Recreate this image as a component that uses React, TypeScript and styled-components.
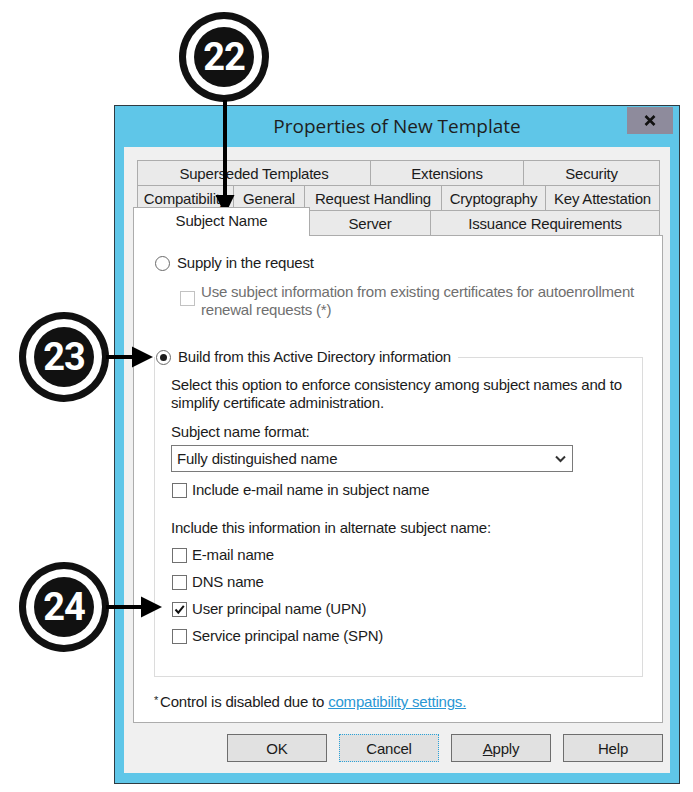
import React from 'react';
import styled, { createGlobalStyle } from 'styled-components';

const GlobalStyle = createGlobalStyle`
  html, body {
    margin: 0;
    padding: 0;
    background: #ffffff;
  }

  body {
    font-family: 'Liberation Sans', Arial, sans-serif;
    font-size: 15px;
    letter-spacing: -0.2px;
    color: #1b1b1b;
  }

  * {
    box-sizing: border-box;
  }
`;

type TabDef = { label: string; width: number };

const TOP_ROW: TabDef[] = [
  { label: 'Superseded Templates', width: 234 },
  { label: 'Extensions', width: 154 },
  { label: 'Security', width: 137 },
];

const MIDDLE_ROW: TabDef[] = [
  { label: 'Compatibility', width: 97 },
  { label: 'General', width: 72 },
  { label: 'Request Handling', width: 138 },
  { label: 'Cryptography', width: 105 },
  { label: 'Key Attestation', width: 115 },
];

const ALT_NAMES = [
  { label: 'E-mail name', checked: false },
  { label: 'DNS name', checked: false },
  { label: 'User principal name (UPN)', checked: true },
  { label: 'Service principal name (SPN)', checked: false },
];

const BADGES = [
  { num: '22', x: 224, y: 57 },
  { num: '23', x: 64, y: 357 },
  { num: '24', x: 64, y: 607 },
];

const CheckMark = () => (
  <svg width="13" height="13" viewBox="0 0 13 13">
    <path d="M2.5 6.5 L5.3 9.6 L10.8 2.8" fill="none" stroke="#111" strokeWidth="2" />
  </svg>
);

const App: React.FC = () => {
  return (
    <SPage>
      <GlobalStyle />
      <SWindow>
        <STitleBar>
          <STitle>Properties of New Template</STitle>
          <SCloseButton>
            <svg width="12" height="11" viewBox="0 0 12 11">
              <path d="M1.5 1 L10.5 10 M10.5 1 L1.5 10" stroke="#111" strokeWidth="2.6" />
            </svg>
          </SCloseButton>
        </STitleBar>

        <SClient>
          <STabRow $inset={4}>
            {TOP_ROW.map((t) => (
              <STab key={t.label} $width={t.width}>
                {t.label}
              </STab>
            ))}
          </STabRow>
          <STabRow $inset={4}>
            {MIDDLE_ROW.map((t) => (
              <STab key={t.label} $width={t.width}>
                {t.label}
              </STab>
            ))}
          </STabRow>
          <STabRow $inset={0}>
            <STab $width={177} $selected>
              Subject Name
            </STab>
            <STab $width={122}>Server</STab>
            <STab $width={230}>Issuance Requirements</STab>
          </STabRow>

          <SPanel>
            <SOptionRow>
              <SRadio />
              <span>Supply in the request</span>
            </SOptionRow>
            <SSubOption>
              <SCheckBox $disabled />
              <SDisabledText>
                Use subject information from existing certificates for autoenrollment
                <br />
                renewal requests (*)
              </SDisabledText>
            </SSubOption>

            <SGroup>
              <SLegend>
                <SRadio $checked />
                <span>Build from this Active Directory information</span>
              </SLegend>
              <SGroupBody>
                <SDescription>
                  Select this option to enforce consistency among subject names and to simplify
                  certificate administration.
                </SDescription>
                <SFieldLabel>Subject name format:</SFieldLabel>
                <SSelect>
                  <span>Fully distinguished name</span>
                  <svg width="11" height="8" viewBox="0 0 11 8">
                    <path d="M1 1.5 L5.5 6 L10 1.5" fill="none" stroke="#333" strokeWidth="2" />
                  </svg>
                </SSelect>
                <SCheckRow $top={9}>
                  <SCheckBox />
                  <span>Include e-mail name in subject name</span>
                </SCheckRow>
                <SFieldLabel $top={20}>Include this information in alternate subject name:</SFieldLabel>
                <SCheckList>
                  {ALT_NAMES.map((item) => (
                    <SCheckRow key={item.label}>
                      <SCheckBox>{item.checked && <CheckMark />}</SCheckBox>
                      <span>{item.label}</span>
                    </SCheckRow>
                  ))}
                </SCheckList>
              </SGroupBody>
            </SGroup>

            <SFootnote>
              <SAsterisk>*</SAsterisk>
              Control is disabled due to <SLink>compatibility settings.</SLink>
            </SFootnote>
          </SPanel>

          <SButtonRow>
            <SButton>OK</SButton>
            <SButton $focused>Cancel</SButton>
            <SButton>
              <u>A</u>pply
            </SButton>
            <SButton>Help</SButton>
          </SButtonRow>
        </SClient>
      </SWindow>

      {BADGES.map((b) => (
        <SBadge key={b.num} style={{ left: b.x - 30, top: b.y - 30 }}>
          {b.num}
        </SBadge>
      ))}

      <SArrows width="693" height="792" viewBox="0 0 693 792">
        <line x1="225" y1="100" x2="225" y2="198" stroke="#000" strokeWidth="4" />
        <polygon points="215.5,195 234.5,195 225,215" fill="#000" />
        <line x1="106" y1="357" x2="134" y2="357" stroke="#000" strokeWidth="4" />
        <polygon points="132,346.5 132,367.5 153,357" fill="#000" />
        <line x1="106" y1="607" x2="143" y2="607" stroke="#000" strokeWidth="4" />
        <polygon points="141,596.5 141,617.5 162,607" fill="#000" />
      </SArrows>
    </SPage>
  );
};

const SPage = styled.div`
  position: relative;
  width: 693px;
  height: 792px;
  padding: 105px 13px 0 114px;
  overflow: hidden;
`;

const SWindow = styled.div`
  display: flex;
  flex-direction: column;

  width: 566px;
  height: 679px;
  padding: 0 9px 10px;
  border: 1px solid #2f3b42;
  background: #5fc6e8;
`;

const STitleBar = styled.div`
  display: grid;
  grid-template-columns: 1fr auto 1fr;
  align-items: start;

  height: 41px;
`;

const STitle = styled.div`
  grid-column: 2;

  font-family: 'Open Sans', 'Liberation Sans', sans-serif;
  font-size: 19px;
  letter-spacing: 0;
  line-height: 41px;
  color: #1e1e1e;
`;

const SCloseButton = styled.div`
  grid-column: 3;
  justify-self: end;
  display: flex;
  align-items: center;
  justify-content: center;

  width: 46px;
  height: 27px;
  margin: 1px -3px 0 0;
  background: #8e8b9c;
`;

const SClient = styled.div`
  display: flex;
  flex-direction: column;
  flex: 1;

  padding: 13px 7px 0 9px;
  background: #f0f0f0;
`;

const STabRow = styled.div<{ $inset: number }>`
  display: flex;
  align-items: flex-end;

  height: 25px;
  padding-left: ${(p) => p.$inset}px;
`;

const STab = styled.div<{ $width: number; $selected?: boolean }>`
  display: flex;
  align-items: center;
  justify-content: center;

  width: ${(p) => p.$width}px;
  height: ${(p) => (p.$selected ? 29 : 25)}px;
  padding-bottom: ${(p) => (p.$selected ? 3 : 0)}px;
  border: 1px solid #acacac;
  border-bottom: none;
  background: ${(p) => (p.$selected ? '#ffffff' : '#eaeaea')};
  white-space: nowrap;

  position: ${(p) => (p.$selected ? 'relative' : 'static')};
  z-index: ${(p) => (p.$selected ? 1 : 'auto')};
  margin-bottom: ${(p) => (p.$selected ? -1 : 0)}px;

  &:not(:first-child) {
    margin-left: -1px;
  }
`;

const SPanel = styled.div`
  display: flex;
  flex-direction: column;

  height: 488px;
  padding: 18px 0 0 20px;
  border: 1px solid #acacac;
  background: #ffffff;
`;

const SOptionRow = styled.div`
  display: flex;
  align-items: center;

  line-height: 18px;
`;

const SRadio = styled.span<{ $checked?: boolean }>`
  position: relative;
  flex: none;

  width: 15px;
  height: 15px;
  margin: 0 7px 0 1px;
  border: 1px solid #6a6a6a;
  border-radius: 50%;
  background: #ffffff;

  &::after {
    content: '';
    display: ${(p) => (p.$checked ? 'block' : 'none')};
    position: absolute;
    left: 3px;
    top: 3px;
    width: 7px;
    height: 7px;
    border-radius: 50%;
    background: #1b1b1b;
  }
`;

const SSubOption = styled.div`
  display: flex;
  align-items: flex-start;

  margin: 11px 0 0 26px;
  line-height: 18px;
`;

const SCheckBox = styled.span<{ $disabled?: boolean }>`
  display: flex;
  align-items: center;
  justify-content: center;
  flex: none;

  width: 15px;
  height: 15px;
  margin-top: ${(p) => (p.$disabled ? 8 : 0)}px;
  margin-right: ${(p) => (p.$disabled ? 6 : 5)}px;
  border: 1px solid ${(p) => (p.$disabled ? '#c2c2c2' : '#707070')};
  background: #ffffff;
`;

const SDisabledText = styled.span`
  color: #6f6f6f;
`;

const SGroup = styled.fieldset`
  width: 489px;
  min-width: 0;
  margin: 29px 0 0;
  padding: 0;
  border: 1px solid #dcdcdc;
`;

const SLegend = styled.legend`
  display: flex;
  align-items: center;

  margin: 0;
  padding: 0 7px 0 0;
  line-height: 18px;
`;

const SGroupBody = styled.div`
  padding: 10px 0 31px 16px;
  line-height: 18px;
`;

const SDescription = styled.div`
  width: 466px;
`;

const SFieldLabel = styled.div<{ $top?: number }>`
  margin-top: ${(p) => p.$top ?? 11}px;
`;

const SSelect = styled.div`
  display: flex;
  align-items: center;
  justify-content: space-between;

  width: 402px;
  height: 27px;
  margin-top: 4px;
  padding: 0 6px 0 5px;
  border: 1px solid #7a7a7a;
  background: #ffffff;
`;

const SCheckRow = styled.div<{ $top?: number }>`
  display: flex;
  align-items: center;

  margin-top: ${(p) => p.$top ?? 0}px;
  padding-left: 1px;
  line-height: 18px;
`;

const SCheckList = styled.div`
  display: flex;
  flex-direction: column;
  gap: 9px;

  margin-top: 9px;
`;

const SFootnote = styled.div`
  margin-top: 14px;
  line-height: 18px;
`;

const SAsterisk = styled.span`
  display: inline-block;
  margin-right: 2px;
  font-size: 11px;
  vertical-align: 3px;
`;

const SLink = styled.span`
  color: #2a97d4;
  text-decoration: underline;
`;

const SButtonRow = styled.div`
  display: flex;
  justify-content: flex-end;
  gap: 12px;

  margin-top: 11px;
`;

const SButton = styled.div<{ $focused?: boolean }>`
  display: flex;
  align-items: center;
  justify-content: center;

  width: 100px;
  height: 28px;
  border: 1px ${(p) => (p.$focused ? 'dotted #2aa2d8' : 'solid #6e6e6e')};
  background: #e1e1e1;
`;

const SBadge = styled.div`
  position: absolute;
  display: flex;
  align-items: center;
  justify-content: center;

  width: 60px;
  height: 60px;
  border-radius: 50%;
  background: #111111;
  box-shadow: 0 0 0 8px #ffffff, 0 0 0 15px #111111;

  font-family: Roboto, 'Liberation Sans', sans-serif;
  font-size: 38px;
  font-weight: 700;
  letter-spacing: -1px;
  line-height: 1;
  color: #ffffff;
`;

const SArrows = styled.svg`
  position: absolute;
  left: 0;
  top: 0;
  pointer-events: none;
`;

export default App;
